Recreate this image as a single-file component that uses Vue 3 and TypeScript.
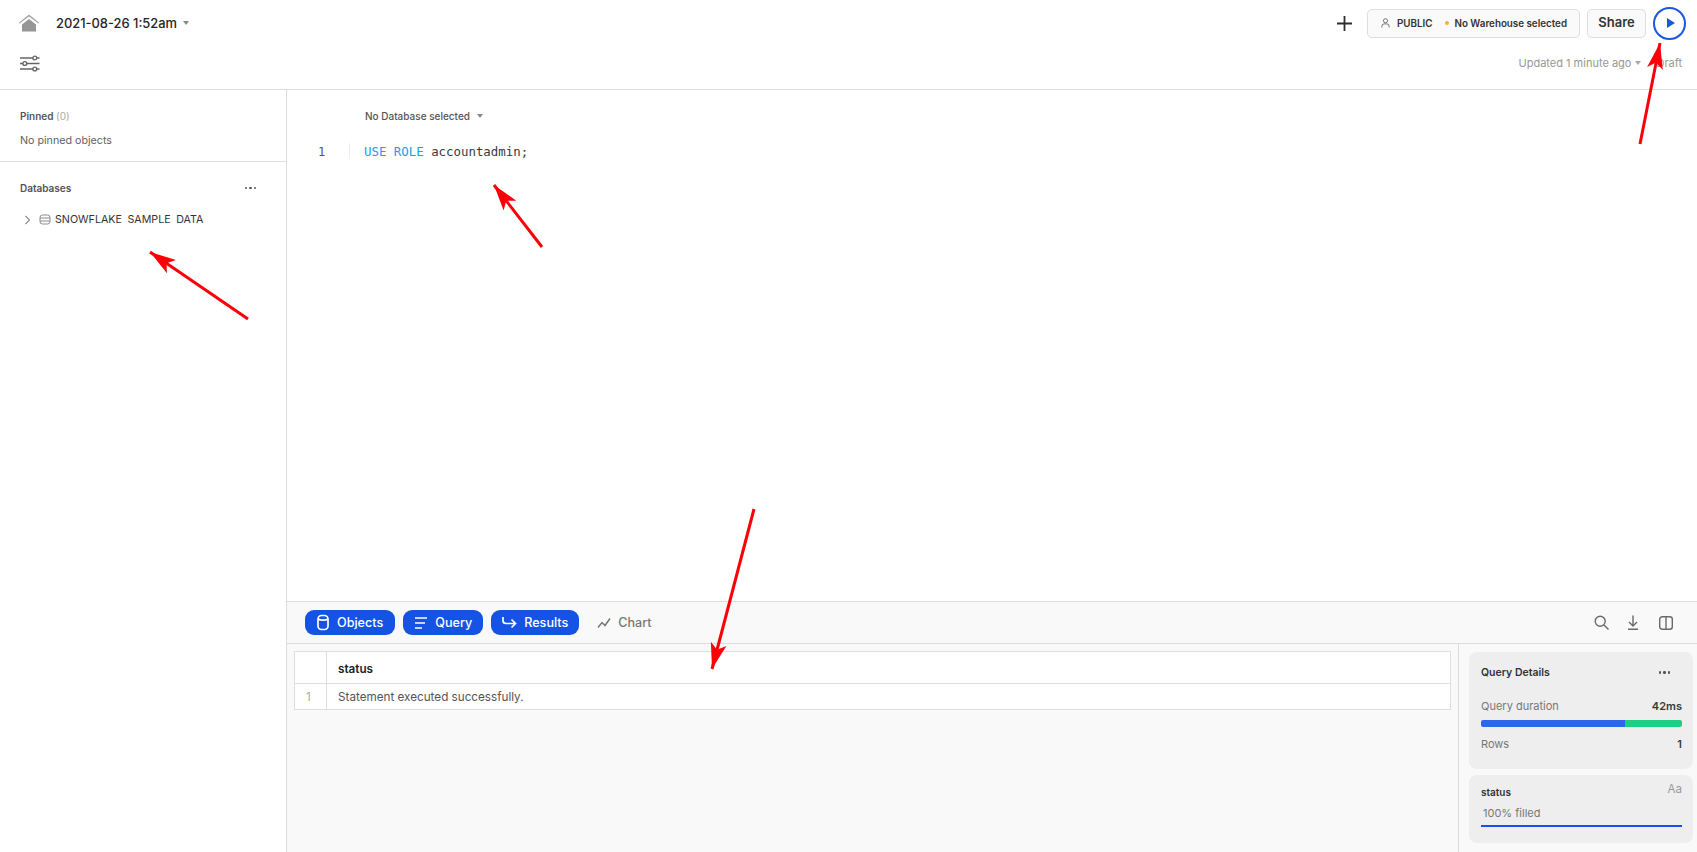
<script setup lang="ts">
const arrows = [
  { x1: 1640, y1: 144, x2: 1660, y2: 43 },
  { x1: 542, y1: 247, x2: 494, y2: 185 },
  { x1: 248, y1: 319, x2: 150, y2: 252 },
  { x1: 754, y1: 509, x2: 712, y2: 669 },
];
function head(a: { x1: number; y1: number; x2: number; y2: number }): string {
  const dx = a.x2 - a.x1, dy = a.y2 - a.y1, l = Math.hypot(dx, dy);
  const ux = dx / l, uy = dy / l, bx = a.x2 - ux * 26, by = a.y2 - uy * 26, w = 8;
  const nx = a.x2 - ux * 20, ny = a.y2 - uy * 20;
  return `${a.x2},${a.y2} ${bx - uy * w},${by + ux * w} ${nx},${ny} ${bx + uy * w},${by - ux * w}`;
}
</script>

<template>
  <div class="page">
    <header class="top">
      <div class="top-row">
        <svg class="home" width="22" height="18" viewBox="0 0 22 18"><path d="M11 .5.8 8.800l.7.8L11 2.600l9.500 7 .7-.8z" fill="#a3a3a3"/><path d="M4 10.500 11 5l7 5.500V17.500H4z" fill="#969696"/></svg>
        <span class="title">2021-08-26 1:52am</span>
        <span class="caret title-caret"></span>
        <div class="spacer"></div>
        <svg class="plus" width="15" height="15" viewBox="0 0 15 15"><path d="M7.500 0v15M0 7.500h15" stroke="#2d2d2d" stroke-width="1.800"/></svg>
        <div class="ctx">
          <svg width="9" height="10" viewBox="0 0 10 11" fill="none" stroke="#666" stroke-width="1"><circle cx="5" cy="3" r="2.300"/><path d="M1 10.500V9a2.500 2.500 0 0 1 2.500-2.500h3A2.500 2.500 0 0 1 9 9v1.500"/></svg>
          <span class="role">PUBLIC</span>
          <i class="dot"></i>
          <span>No Warehouse selected</span>
        </div>
        <button class="share">Share</button>
        <div class="run"><i></i></div>
      </div>
      <div class="sub-row">
        <svg width="20" height="17" viewBox="0 0 20 17" fill="none" stroke="#666" stroke-width="1.400"><path d="M0 3h13M16.500 3H19.500M0 8.500h3M6.500 8.500H19.500M0 14h13M16.500 14H19.500"/><circle cx="14.800" cy="3" r="1.900"/><circle cx="4.800" cy="8.500" r="1.900"/><circle cx="14.800" cy="14" r="1.900"/></svg>
        <div class="spacer"></div>
        <span class="updated">Updated 1 minute ago</span>
        <span class="caret updated-caret"></span>
        <span class="draft">Draft</span>
      </div>
    </header>

    <div class="main">
      <aside class="side">
        <section class="pinned">
          <div class="sec-title">Pinned <span>(0)</span></div>
          <div class="none">No pinned objects</div>
        </section>
        <section class="dbs">
          <div class="db-head">
            <div class="sec-title">Databases</div>
            <div class="dots"><i></i><i></i><i></i></div>
          </div>
          <div class="db-row">
            <svg width="7" height="10" viewBox="0 0 7 10" fill="none" stroke="#8a8a8a" stroke-width="1.100"><path d="m1.500 1 4 4-4 4"/></svg>
            <svg width="12" height="11" viewBox="0 0 12 11" fill="none" stroke="#8a8a8a" stroke-width="1"><rect x="1" y="1" width="10" height="9" rx="2.500"/><path d="M1 4h10M1 7h10"/></svg>
            <span class="db-name">SNOWFLAKE SAMPLE DATA</span>
          </div>
        </section>
      </aside>

      <main class="work">
        <div class="editor">
          <div class="db-select">No Database selected <span class="caret"></span></div>
          <div class="code">
            <span class="ln">1</span>
            <span class="gutter"></span>
            <code><b>USE ROLE</b> accountadmin;</code>
          </div>
        </div>

        <div class="bottom">
          <div class="tabs">
            <button class="tab on first">
              <svg width="14" height="17" viewBox="0 0 14 17" fill="none" stroke="#fff" stroke-width="1.700"><rect x="2" y="1.500" width="10" height="14" rx="3.500"/><path d="M2 5c2 1.400 8 1.400 10 0"/></svg>
              Objects
            </button>
            <button class="tab on">
              <svg width="14" height="14" viewBox="0 0 14 14" fill="none" stroke="#fff" stroke-width="1.700"><path d="M1 2h12M1 7h10M1 12h7"/></svg>
              Query
            </button>
            <button class="tab on">
              <svg width="15" height="14" viewBox="0 0 15 14" fill="none" stroke="#fff" stroke-width="1.700"><path d="M1 1v3.500a3 3 0 0 0 3 3h9.500M9.500 3.500l4 4-4 4"/></svg>
              Results
            </button>
            <button class="tab plain">
              <svg width="14" height="12" viewBox="0 0 14 12" fill="none" stroke="#777" stroke-width="1.500"><path d="m1 10.500 4-5 3 3 5-7"/></svg>
              Chart
            </button>
            <div class="spacer"></div>
            <div class="tools">
              <svg width="15" height="15" viewBox="0 0 15 15" fill="none" stroke="#6a6a6a" stroke-width="1.400"><circle cx="6.200" cy="6.200" r="5"/><path d="m10 10 4.500 4.500"/></svg>
              <svg class="dl" width="12" height="15" viewBox="0 0 12 15" fill="none" stroke="#6a6a6a" stroke-width="1.400"><path d="M6 .5v10M2 7l4 4 4-4M1 14.300h10"/></svg>
              <svg width="14" height="14" viewBox="0 0 14 14" fill="none" stroke="#6a6a6a" stroke-width="1.400"><rect x=".7" y=".7" width="12.600" height="12.600" rx="2.500"/><path d="M7 .7v12.600"/></svg>
            </div>
          </div>

          <div class="results">
            <div class="table-wrap">
              <table>
                <thead><tr><th class="idx"></th><th>status</th></tr></thead>
                <tbody><tr><td class="idx">1</td><td>Statement executed successfully.</td></tr></tbody>
              </table>
            </div>
            <div class="details">
              <div class="card q">
                <div class="q-head">
                  <strong>Query Details</strong>
                  <div class="dots"><i></i><i></i><i></i></div>
                </div>
                <div class="kv"><span>Query duration</span><b>42ms</b></div>
                <div class="bar"><i class="blue"></i><i class="green"></i></div>
                <div class="kv"><span>Rows</span><b>1</b></div>
              </div>
              <div class="card s">
                <div class="s-head"><strong>status</strong><span>Aa</span></div>
                <div class="filled">100% filled</div>
                <div class="fill-line"></div>
              </div>
            </div>
          </div>
        </div>
      </main>
    </div>

    <svg class="arrows" width="1697" height="852" viewBox="0 0 1697 852">
      <g v-for="(a, i) in arrows" :key="i">
        <line :x1="a.x1" :y1="a.y1" :x2="a.x2" :y2="a.y2" stroke="#fb0007" stroke-width="3" />
        <polygon :points="head(a)" fill="#fb0007" />
      </g>
    </svg>
  </div>
</template>

<style>
html, body { margin: 0; background: #fff; overflow: hidden; }
</style>

<style scoped>
.page {
  position: relative;
  width: 1697px;
  height: 852px;
  display: flex;
  flex-direction: column;
  overflow: hidden;
  font-family: Inter, "Liberation Sans", sans-serif;
  color: #2b2b2b;
  background: #fff;
}
.spacer { flex: 1; }
.top { height: 90px; flex: none; box-sizing: border-box; border-bottom: 1px solid #dcdcdc; }
.top-row { height: 46px; display: flex; align-items: center; padding: 0 11px 0 18px; }
.home { margin-right: 16px; }
.title { font-size: 12.900px; font-weight: 500; color: #262626; }
.caret { display: inline-block; width: 0; height: 0; border-left: 3.500px solid transparent; border-right: 3.500px solid transparent; border-top: 4px solid #8a8a8a; }
.title-caret { margin-left: 6px; }
.plus { margin-right: 15px; }
.ctx {
  box-sizing: border-box; width: 213px; height: 29px; border: 1px solid #dedede; border-radius: 5px; background: #fafafa;
  display: flex; align-items: center; padding-left: 13px; font-size: 9.800px; font-weight: 600; color: #333; white-space: nowrap;
}
.role { margin-left: 7px; }
.dot { width: 4px; height: 4px; border-radius: 50%; background: #f7b32b; margin: 0 5px 0 13px; }
.share {
  box-sizing: border-box; width: 59px; height: 29px; margin-left: 7px; border: 1px solid #dedede; border-radius: 5px; background: #fafafa;
  font: 600 13px Inter, sans-serif; color: #333; padding: 0 0 2px;
}
.run { box-sizing: border-box; width: 33px; height: 33px; margin-left: 7px; border: 2px solid #1a56e0; border-radius: 50%; display: flex; align-items: center; justify-content: center; }
.run i { border-left: 8.500px solid #1a56e0; border-top: 5px solid transparent; border-bottom: 5px solid transparent; margin-left: 2px; }
.sub-row { height: 40px; display: flex; align-items: center; padding: 0 15px 6px 20px; box-sizing: border-box; }
.updated { font-size: 11px; color: #979797; }
.updated-caret { margin-left: 4px; border-top-color: #aaa; }
.draft { margin-left: 15px; font-size: 11px; color: #979797; }

.main { flex: 1; display: flex; min-height: 0; }
.side { width: 287px; flex: none; box-sizing: border-box; border-right: 1px solid #dcdcdc; }
.pinned { height: 72px; box-sizing: border-box; padding: 20px 20px 0; border-bottom: 1px solid #dedede; }
.sec-title { font-size: 10px; font-weight: 600; color: #555; }
.sec-title span { font-weight: 400; color: #aaa; }
.none { margin-top: 12px; font-size: 10.700px; color: #5f5f5f; }
.dbs { padding: 20px 20px 0; }
.db-head { display: flex; align-items: center; justify-content: space-between; padding-right: 10px; }
.dots { display: flex; gap: 2px; }
.dots i { width: 2.500px; height: 2.500px; border-radius: 50%; background: #555; }
.db-row { display: flex; align-items: center; margin: 19px 0 0 4px; font-size: 10.700px; color: #333; white-space: nowrap; }
.db-row svg:nth-child(2) { margin: 0 4px 0 8px; }
.db-name { word-spacing: 2.500px; }

.work { flex: 1; min-width: 0; display: flex; flex-direction: column; }
.editor { flex: 1; min-height: 0; padding: 20px 0 0 78px; }
.db-select { font-size: 10px; font-weight: 500; color: #555; display: flex; align-items: center; gap: 7px; }
.code { position: relative; display: flex; align-items: center; margin-top: 21px; height: 17px; }
.ln { position: absolute; left: -47px; font: 12px "DejaVu Sans Mono", monospace; color: #555; }
.gutter { position: absolute; left: -16px; top: 0; width: 1px; height: 16px; background: #eee; }
code { font: 12.400px "DejaVu Sans Mono", monospace; color: #3a3a3a; margin-left: -1px; }
code b { font-weight: 400; color: #1a9df4; }

.bottom { height: 251px; flex: none; background: #f9f9f9; border-top: 1px solid #dcdcdc; box-sizing: border-box; display: flex; flex-direction: column; }
.tabs { height: 42px; flex: none; box-sizing: border-box; border-bottom: 1px solid #dcdcdc; display: flex; align-items: center; gap: 8px; padding: 0 24px 0 18px; }
.tab { height: 25px; box-sizing: border-box; border: 0; border-radius: 9px; font: 500 12.600px Inter, sans-serif; display: flex; align-items: center; gap: 7px; padding: 0 11px; }
.tab.first { padding-right: 12px; }
.tab.on { background: #1553e4; color: #fff; }
.tab.plain { background: transparent; color: #777; padding: 0 9px 0 10px; gap: 7px; }
.tools { display: flex; align-items: center; gap: 18px; }
.dl { margin-right: 2px; }
.results { flex: 1; min-height: 0; display: flex; }
.table-wrap { flex: 1; min-width: 0; padding: 7px 7px 0; box-sizing: border-box; }
table { width: 100%; border-collapse: collapse; background: #fff; font-size: 11.700px; table-layout: fixed; }
th, td { border: 1px solid #dedede; text-align: left; padding: 0 11px; box-sizing: border-box; }
th { height: 32px; padding-top: 2px; font-weight: 600; color: #222; }
td { height: 26px; color: #555; }
.idx { width: 32px; color: #aaa; font-weight: 400; }
.details { width: 239px; flex: none; box-sizing: border-box; border-left: 1px solid #dcdcdc; padding: 8px 4px 0 10px; display: flex; flex-direction: column; gap: 6px; }
.card { background: #eeeeee; border-radius: 8px; box-sizing: border-box; padding: 0 11px 0 12px; }
.q { height: 117px; }
.q-head { display: flex; justify-content: space-between; align-items: center; padding-right: 12px; height: 41px; }
.q-head strong { font-size: 10.500px; font-weight: 600; color: #333; }
.kv { display: flex; justify-content: space-between; font-size: 11px; line-height: 14px; color: #777; }
.q-head + .kv { margin-top: 6px; }
.kv b { font-weight: 600; color: #3a3a3a; }
.bar { display: flex; height: 7px; margin: 7px 0 10px; border-radius: 2px; overflow: hidden; }
.blue { width: 71.500%; background: #2a66ee; }
.green { flex: 1; background: #1fce85; }
.s { height: 68px; padding-top: 7px; }
.s-head { display: flex; justify-content: space-between; align-items: flex-start; height: 16px; line-height: 14px; }
.s-head strong { font-size: 10px; font-weight: 600; color: #333; margin-top: 3px; }
.s-head span { font-size: 11.500px; color: #999; }
.filled { margin: 8px 0 5px 2px; font-size: 11px; line-height: 14px; color: #777; }
.fill-line { height: 2px; background: #1553e4; }
.arrows { position: absolute; inset: 0; pointer-events: none; }
</style>
